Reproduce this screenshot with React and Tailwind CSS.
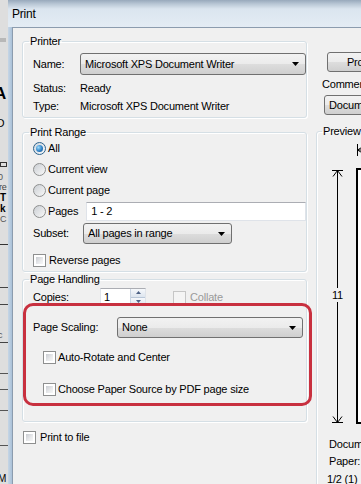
import React from "react";

const btnBg =
  "bg-[linear-gradient(to_bottom,#f2f2f2_0%,#ebebeb_50%,#dddddd_51%,#cfcfcf_100%)]";

const Check = ({ disabled }) => (
  <span
    className={
      disabled
        ? "flex-none w-[13px] h-[13px] border border-[#c6c6c6] bg-[#f4f4f4] p-[2px]"
        : "flex-none w-[13px] h-[13px] border border-[#8e8f8f] bg-white p-[2px]"
    }
  >
    <span
      className={
        disabled
          ? "block w-full h-full bg-[#f4f4f4]"
          : "block w-full h-full bg-[linear-gradient(135deg,#c9ccd1_0%,#e9eaec_60%,#f7f7f7_100%)]"
      }
    />
  </span>
);

const Radio = ({ checked }) => (
  <span
    className={
      checked
        ? "flex-none w-[13px] h-[13px] rounded-full border border-[#2c628b] bg-[linear-gradient(135deg,#cfd7df,#f7f9fb)] flex items-center justify-center"
        : "flex-none w-[13px] h-[13px] rounded-full border border-[#8e8f8f] bg-[linear-gradient(135deg,#cbcfd4,#f8f8f8)] flex items-center justify-center"
    }
  >
    {checked && (
      <span className="w-[7px] h-[7px] rounded-full bg-[radial-gradient(circle_at_35%_35%,#9ddcfc_0%,#2f82c7_55%,#164f87_100%)]" />
    )}
  </span>
);

const Arrow = () => (
  <svg width="7" height="4" viewBox="0 0 7 4" className="flex-none">
    <path d="M0 0h7L3.5 4z" fill="#000" />
  </svg>
);

const Combo = ({ children, className = "", arrow = true }) => (
  <div
    className={`flex items-center border border-[#707070] rounded-[3px] ${btnBg} pl-[4px] pr-[6px] ${className}`}
  >
    <span className="flex-1 whitespace-nowrap overflow-hidden">{children}</span>
    {arrow && <Arrow />}
  </div>
);

const Group = ({ label, legendClass = "ml-[6px]", className = "", children }) => (
  <fieldset
    className={`border border-[#d5dfe5] rounded-[3px] shadow-[inset_1px_1px_0_#ffffff,1px_1px_0_#ffffff] ${className}`}
  >
    <legend className={`${legendClass} px-[1px] leading-[12px]`}>{label}</legend>
    {children}
  </fieldset>
);

function Backdrop() {
  return (
    <div className="w-[8px] flex-none bg-[#dedede] flex flex-col overflow-hidden text-black">
      <div className="mt-[38px] h-[4px] w-[6px] bg-[#b8b8b8]" />
      <div className="mt-[44px] ml-[-6px] text-[17px] font-bold leading-[16px]">A</div>
      <div className="mt-[16px] ml-[-4px] text-[11px] leading-[10px]">O</div>
      <div className="mt-[34px] h-[6px] w-[7px] border border-[#333]" />
      <div className="mt-[6px] ml-[-2px] text-[9px] leading-[9px] text-[#555]">0</div>
      <div className="mt-[1px] ml-[-1px] text-[9px] leading-[9px] text-[#444]">re</div>
      <div className="mt-[1px] text-[10px] font-bold leading-[10px]">T</div>
      <div className="mt-[1px] text-[10px] font-bold leading-[10px]">k</div>
      <div className="mt-[1px] text-[9px] leading-[9px] text-[#555]">C</div>
      <div className="mt-[20px] h-[1px] w-[8px] bg-[#333]" />
      <div className="mt-[42px] h-[1px] w-[8px] bg-[#444]" />
      <div className="mt-[16px] h-[1px] w-[8px] bg-[#444]" />
      <div className="mt-[26px] ml-[-2px] text-[9px] leading-[9px] text-[#555]">c</div>
      <div className="mt-[2px] h-[1px] w-[8px] bg-[#444]" />
      <div className="mt-[30px] h-[1px] w-[8px] bg-[#555]" />
      <div className="mt-[16px] h-[1px] w-[8px] bg-[#555]" />
      <div className="mt-[20px] h-[1px] w-[8px] bg-[#555]" />
      <div className="mt-[34px] h-[1px] w-[8px] bg-[#555]" />
      <div className="mt-[28px] ml-[-2px] text-[10px] leading-[10px]">M</div>
    </div>
  );
}

function Spin() {
  return (
    <div className="w-[15px] h-full flex flex-col border-l border-[#c9d4e2] flex-none">
      <div className="flex-1 flex items-center justify-center bg-[linear-gradient(to_bottom,#f6f8fb,#dde5ef)] border-b border-[#b9c7d8]">
        <svg width="5" height="3" viewBox="0 0 5 3">
          <path d="M0 3L2.5 0L5 3z" fill="#4d6185" />
        </svg>
      </div>
      <div className="flex-1 flex items-center justify-center bg-[linear-gradient(to_bottom,#f6f8fb,#dde5ef)]">
        <svg width="5" height="3" viewBox="0 0 5 3">
          <path d="M0 0L2.5 3L5 0z" fill="#4d6185" />
        </svg>
      </div>
    </div>
  );
}

function LeftColumn() {
  return (
    <div className="ml-[9px] w-[285px] flex-none relative flex flex-col">
      <Group label="Printer" className="mt-[7px]">
        <div className="pl-[10px] pb-[2px]">
          <div className="mt-[6px] h-[22px] flex items-center">
            <span className="w-[47px]">Name:</span>
            <Combo className="w-[226px] h-[22px]">Microsoft XPS Document Writer</Combo>
          </div>
          <div className="mt-[4px] h-[18px] flex items-center">
            <span className="w-[47px]">Status:</span>
            <span>Ready</span>
          </div>
          <div className="h-[18px] flex items-center">
            <span className="w-[47px]">Type:</span>
            <span>Microsoft XPS Document Writer</span>
          </div>
        </div>
      </Group>

      <Group label="Print Range" className="mt-[8px]">
        <div className="pl-[10px] pb-[3px]">
          <div className="h-[21px] flex items-center gap-[2px]">
            <Radio checked />
            <span>All</span>
          </div>
          <div className="h-[21px] flex items-center gap-[2px]">
            <Radio />
            <span>Current view</span>
          </div>
          <div className="h-[21px] flex items-center gap-[2px]">
            <Radio />
            <span>Current page</span>
          </div>
          <div className="h-[21px] flex items-center gap-[2px]">
            <Radio />
            <span>Pages</span>
            <div className="ml-[6px] flex-1 h-[19px] bg-white border border-[#dfe3e9] border-t-[#abadb3] flex items-center pl-[4px]">
              1 - 2
            </div>
          </div>
          <div className="mt-[1px] h-[21px] flex items-center">
            <span className="w-[50px]">Subset:</span>
            <Combo className="w-[149px] h-[21px]">All pages in range</Combo>
          </div>
          <div className="mt-[8px] h-[16px] flex items-center gap-[3px]">
            <Check />
            <span>Reverse pages</span>
          </div>
        </div>
      </Group>

      <Group label="Page Handling" className="mt-[1px]">
        <div className="pl-[10px] pb-[24px]">
          <div className="mt-[3px] h-[18px] flex items-center">
            <span className="w-[67px]">Copies:</span>
            <div className="w-[46px] h-[18px] bg-white border border-[#dfe3e9] border-t-[#abadb3] flex items-center">
              <span className="flex-1 pl-[3px]">1</span>
              <Spin />
            </div>
            <div className="ml-[27px] flex items-center gap-[4px]">
              <Check disabled />
              <span className="text-[#9a9a9a]">Collate</span>
            </div>
          </div>
          <div className="mt-[11px] h-[21px] flex items-center">
            <span className="w-[84px]">Page Scaling:</span>
            <Combo className="w-[186px] h-[21px]">None</Combo>
          </div>
          <div className="mt-[11px] ml-[10px] h-[16px] flex items-center gap-[2px]">
            <Check />
            <span>Auto-Rotate and Center</span>
          </div>
          <div className="mt-[16px] ml-[10px] h-[16px] flex items-center gap-[2px]">
            <Check />
            <span>Choose Paper Source by PDF page size</span>
          </div>
        </div>
      </Group>

      <div className="mt-[7px] ml-[1px] h-[16px] flex items-center gap-[4px]">
        <Check />
        <span>Print to file</span>
      </div>

      {/* highlight drawn over the scaling options */}
      <div className="absolute left-[1px] top-[275px] w-[289px] h-[103px] border-[3px] border-[#c8303f] rounded-[10px] pointer-events-none" />
    </div>
  );
}

function PreviewDrawing() {
  return (
    <svg width="60" height="290" viewBox="0 0 60 290" className="block">
      {/* width dimension */}
      <path d="M40.5 7v12M40.5 13H60M40.5 13l5-3M40.5 13l5 3" stroke="#000" fill="none" />
      {/* height dimension */}
      <path
        d="M15 33.5h11M20.5 33.5V151M20.5 165v120.5M15 285.5h11M20.5 33.5l-4.5 6M20.5 33.5l4.5 6M20.5 285.5l-4.5-6M20.5 285.5l4.5-6"
        stroke="#000"
        fill="none"
      />
      <text
        x="20.5"
        y="162"
        textAnchor="middle"
        fontSize="11"
        fontFamily="'Liberation Sans', Arial, sans-serif"
        fill="#000"
      >
        11
      </text>
      {/* page */}
      <rect x="40" y="32" width="40" height="254" fill="#ffffff" stroke="#000" strokeWidth="2" />
    </svg>
  );
}

function RightColumn() {
  return (
    <div className="ml-[9px] flex-1 min-w-0 flex flex-col items-start">
      <div
        className={`mt-[24px] ml-[11px] w-[88px] h-[20px] flex-none border border-[#707070] rounded-[3px] ${btnBg} flex items-center justify-center whitespace-nowrap`}
      >
        Properties
      </div>
      <div className="mt-[6px] ml-[6px] leading-[12px] whitespace-nowrap">Comments &amp; Forms:</div>
      <Combo className="mt-[5px] ml-[8px] w-[130px] h-[20px] flex-none" arrow={false}>
        Document and Markups
      </Combo>
      <Group label="Preview" legendClass="ml-[5px]" className="mt-[10px] w-[200px] h-[400px] flex-none">
        <PreviewDrawing />
        <div className="mt-[9px] pl-[12px] leading-[17px] whitespace-nowrap">Document: 8.5 x 11.0 inches</div>
        <div className="pl-[12px] leading-[17px] whitespace-nowrap">Paper: 8.5 x 11.0 inches</div>
        <div className="mt-[1px] pl-[10px] leading-[17px] whitespace-nowrap">1/2 (1)</div>
      </Group>
    </div>
  );
}

export default function App() {
  return (
    <div className="w-[361px] h-[484px] overflow-hidden flex font-['Liberation_Sans',Arial,sans-serif] text-[11px] tracking-[-0.2px] text-black">
      <Backdrop />
      <div className="flex-1 min-w-0 flex flex-col">
        <div className="h-[27px] flex-none flex items-center pl-[4px] text-[12px] bg-[linear-gradient(to_bottom,#98a9bb_0px,#b9c7d5_4px,#dbe5ef_9px,#e4ecf4_27px)]">
          Print
        </div>
        <div className="flex-1 min-h-0 flex">
          <div className="w-[4px] flex-none bg-[linear-gradient(to_right,#c6d6e6,#aac1d8)]" />
          <div className="flex-1 min-w-0 flex border-l border-t border-[#8c9cae] bg-[#f0f0f0]">
            <LeftColumn />
            <RightColumn />
          </div>
        </div>
      </div>
    </div>
  );
}
